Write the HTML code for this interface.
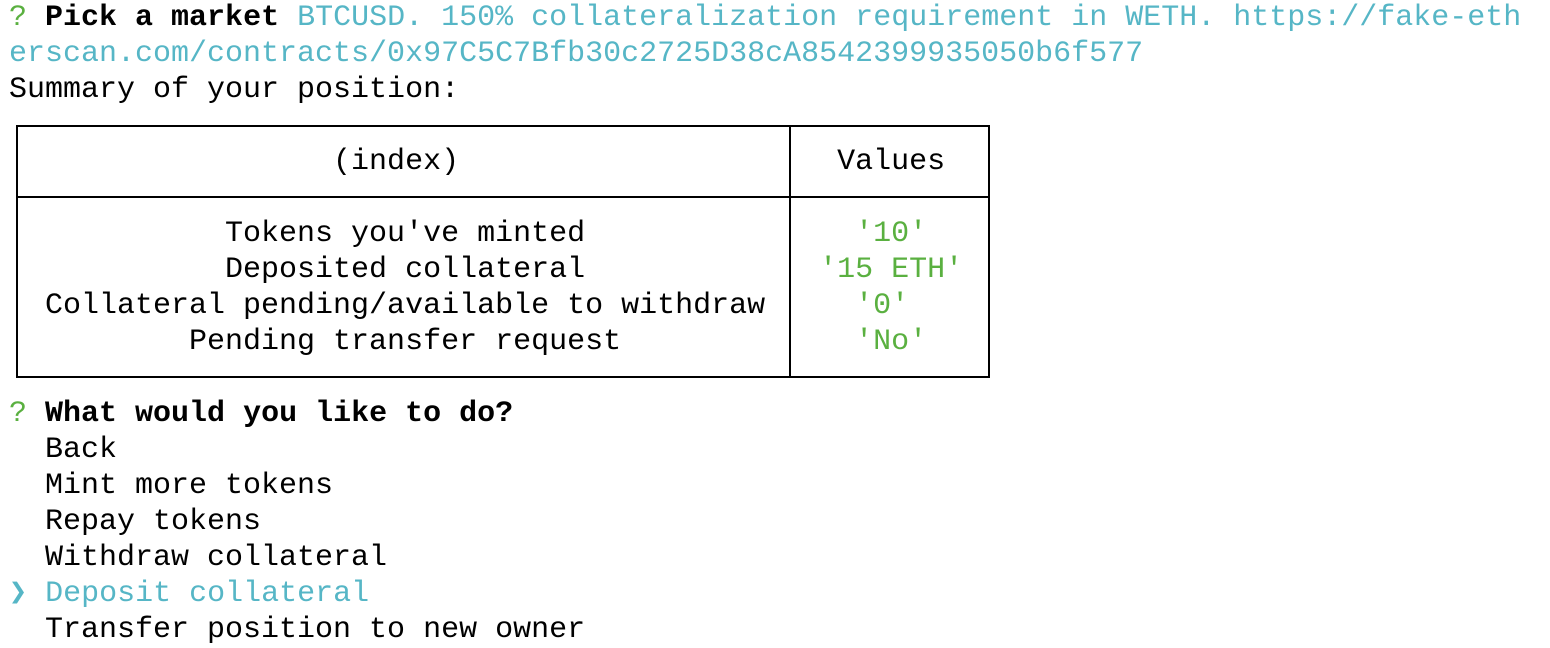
<!DOCTYPE html>
<html><head><meta charset="utf-8"><style>
html,body{margin:0;padding:0;background:#fff;width:1550px;height:648px;overflow:hidden;position:relative}
pre{position:absolute;left:9px;top:0px;margin:0;font-family:"Liberation Mono",monospace;font-size:30px;line-height:36px;color:#000;white-space:pre}
.c{color:#56b6c6}.g{color:#5ab040}b{font-weight:bold}
.h{position:absolute;height:2px;background:#000}
.v{position:absolute;width:2px;background:#000}
</style></head><body>
<pre><span class="g">?</span> <b>Pick a market</b> <span class="c">BTCUSD. 150% collateralization requirement in WETH. https://fake-eth</span>
<span class="c">erscan.com/contracts/0x97C5C7Bfb30c2725D38cA8542399935050b6f577</span>
Summary of your position:

                  (index)                     Values

            Tokens you've minted               <span class="g">'10'</span>
            Deposited collateral             <span class="g">'15 ETH'</span>
  Collateral pending/available to withdraw     <span class="g">'0'</span>
          Pending transfer request             <span class="g">'No'</span>

<span class="g">?</span> <b>What would you like to do?</b>
  Back
  Mint more tokens
  Repay tokens
  Withdraw collateral
<span class="c"><b>❯</b> Deposit collateral</span>
  Transfer position to new owner</pre>
<div class="h" style="left:16px;width:974px;top:125px"></div>
<div class="h" style="left:16px;width:974px;top:196px"></div>
<div class="h" style="left:16px;width:974px;top:376px"></div>
<div class="v" style="left:16px;top:125px;height:253px"></div>
<div class="v" style="left:789px;top:125px;height:253px"></div>
<div class="v" style="left:988px;top:125px;height:253px"></div>
</body></html>
